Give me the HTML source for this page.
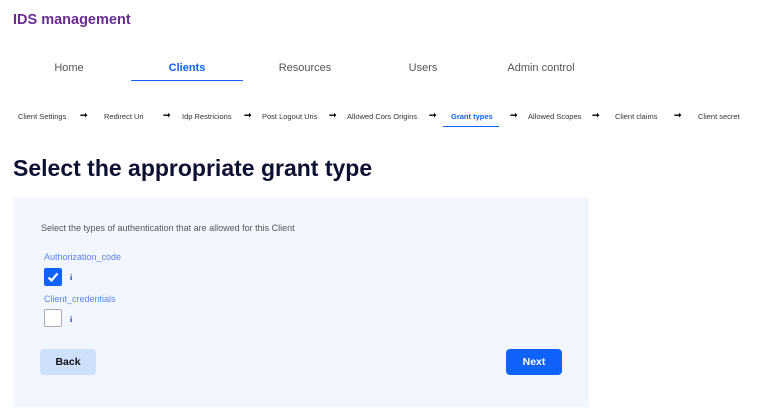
<html><head><style>
body{margin:0;width:758px;height:413px;background:#fff;font-family:"Liberation Sans",sans-serif;position:relative;overflow:hidden}
.a{position:absolute;white-space:nowrap}
.n{font-size:11px;color:#555;top:62px;transform:translateX(-50%)}
.s{font-size:7.5px;color:#333;top:112px}
.ar{font-size:9px;color:#000;top:110px;font-weight:bold}
.cb{position:absolute;left:44px;width:16px;height:16px;border-radius:2px}
.i{font-size:8px;color:#1a3fb0;font-weight:bold;font-family:"Liberation Serif",serif}
.btn{position:absolute;top:349px;width:56px;height:26px;border-radius:4px;font-size:10.5px;font-weight:bold;text-align:center;line-height:26px}
</style></head><body>
<div class="a" style="left:13px;top:12px;font-size:14.5px;font-weight:bold;color:#6a2c91">IDS management</div>
<div class="a n" style="left:69px">Home</div>
<div class="a n" style="left:187px;color:#0f62fe;font-weight:bold">Clients</div>
<div class="a" style="left:131px;top:80px;width:112px;height:1px;background:#0f62fe"></div>
<div class="a n" style="left:305px">Resources</div>
<div class="a n" style="left:423px">Users</div>
<div class="a n" style="left:541px">Admin control</div>
<div class="a s" style="left:18px">Client Settings</div>
<div class="a s" style="left:104px">Redirect Uri</div>
<div class="a s" style="left:182px">Idp Restricions</div>
<div class="a s" style="left:262px">Post Logout Uris</div>
<div class="a s" style="left:347px">Allowed Cors Origins</div>
<div class="a s" style="left:451px;color:#0f62fe;font-weight:bold">Grant types</div>
<div class="a" style="left:443px;top:126px;width:56px;height:1px;background:#0f62fe"></div>
<div class="a s" style="left:528px">Allowed Scopes</div>
<div class="a s" style="left:615px">Client claims</div>
<div class="a s" style="left:698px">Client secret</div>
<div class="a ar" style="left:80px">➞</div><div class="a ar" style="left:163px">➞</div><div class="a ar" style="left:244px">➞</div><div class="a ar" style="left:329px">➞</div><div class="a ar" style="left:429px">➞</div><div class="a ar" style="left:510px">➞</div><div class="a ar" style="left:592px">➞</div><div class="a ar" style="left:674px">➞</div>
<div class="a" style="left:13px;top:155px;font-size:23px;font-weight:bold;color:#0d1030">Select the appropriate grant type</div>
<div class="a" style="left:13px;top:197px;width:576px;height:210px;background:#f2f6fe;border-radius:2px"></div>
<div class="a" style="left:41px;top:223px;font-size:9px;color:#555">Select the types of authentication that are allowed for this Client</div>
<div class="a" style="left:44px;top:252px;font-size:9px;color:#5b82f0">Authorization_code</div>
<div class="cb" style="top:268px;background:#0f62fe;border:1px solid #0f62fe"><svg width="16" height="16" viewBox="0 0 16 16"><path d="M3.5 8.5l3 3 6-7" stroke="#fff" stroke-width="2.2" fill="none"/></svg></div>
<div class="a i" style="left:70px;top:273px">i</div>
<div class="a" style="left:44px;top:294px;font-size:9px;color:#5b82f0">Client_credentials</div>
<div class="cb" style="top:309px;background:#fff;border:1px solid #aaa"></div>
<div class="a i" style="left:70px;top:315px">i</div>
<div class="btn" style="left:40px;background:#cfe0fd;color:#111">Back</div>
<div class="btn" style="left:506px;background:#0f62fe;color:#fff">Next</div>
</body></html>
